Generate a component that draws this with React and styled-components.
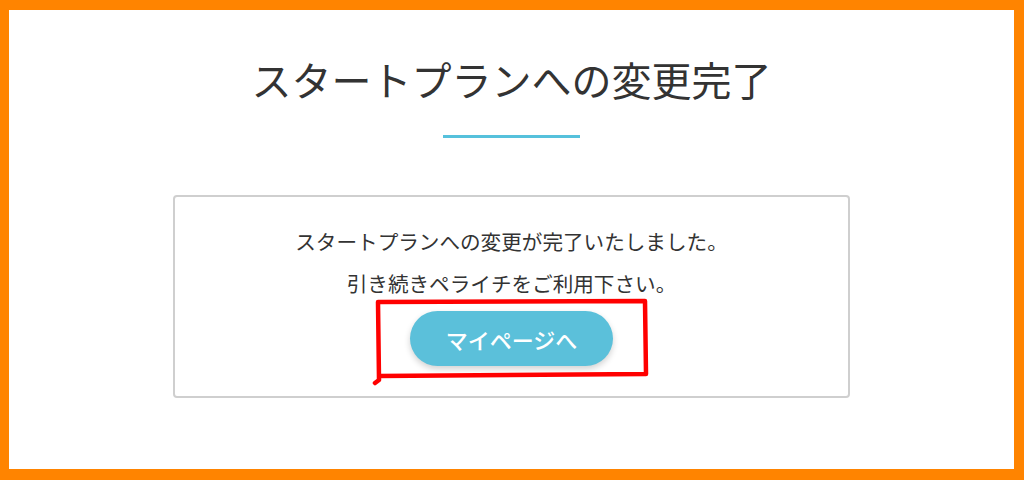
import React from "react";
import styled, { createGlobalStyle } from "styled-components";

const GlobalStyle = createGlobalStyle`
  html, body {
    margin: 0;
    padding: 0;
    background: #fff;
  }
  body {
    font-family: "Noto Sans CJK JP", "Noto Sans", sans-serif;
  }
`;

const App = () => {
  return (
    <>
      <GlobalStyle />
      <Frame>
        <Page>
          <Title>スタートプランへの変更完了</Title>
          <TitleBar />
          <Card>
            <Message>スタートプランへの変更が完了いたしました。</Message>
            <Message>引き続きペライチをご利用下さい。</Message>
            <ButtonWrap>
              <MyPageButton>マイページへ</MyPageButton>
              <Highlight viewBox="0 0 280 92" aria-hidden="true">
                <path
                  d="M3 85 L7 82 L6 4 L273 3 L274 76 L7 78"
                  fill="none"
                  stroke="#ff0000"
                  strokeWidth="4.5"
                  strokeLinejoin="round"
                  strokeLinecap="round"
                />
              </Highlight>
            </ButtonWrap>
          </Card>
        </Page>
      </Frame>
    </>
  );
};

const Frame = styled.div`
  width: 1024px;
  height: 480px;
  box-sizing: border-box;
  background: #ff8400;
  padding: 10px 10px 11px 9px;
`;

const Page = styled.main`
  height: 100%;
  background: #fff;
  display: flex;
  flex-direction: column;
  align-items: center;
  padding-top: 39px;
  box-sizing: border-box;
`;

const Title = styled.h1`
  margin: 0;
  font-size: 40px;
  line-height: 60px;
  font-weight: 400;
  color: #333;
`;

const TitleBar = styled.div`
  width: 137px;
  height: 3px;
  margin-top: 26px;
  background: #56c1dc;
`;

const Card = styled.section`
  width: 677px;
  margin-top: 57px;
  box-sizing: border-box;
  border: 2px solid #cfcfcf;
  border-radius: 4px;
  padding: 23px 0 30px;
  display: flex;
  flex-direction: column;
  align-items: center;
`;

const Message = styled.p`
  margin: 0;
  font-size: 20.6px;
  line-height: 42px;
  color: #333;
`;

const ButtonWrap = styled.div`
  position: relative;
  margin-top: 7px;
`;

const MyPageButton = styled.button`
  width: 203px;
  height: 55px;
  border: none;
  border-radius: 28px;
  background: #5bc0da;
  color: #fff;
  font-family: inherit;
  font-size: 22px;
  font-weight: 500;
  box-shadow: 0 3px 6px rgba(0, 0, 0, 0.18);
  cursor: pointer;
`;

const Highlight = styled.svg`
  position: absolute;
  left: -38px;
  top: -13px;
  width: 280px;
  height: 92px;
  pointer-events: none;
`;

export default App;
